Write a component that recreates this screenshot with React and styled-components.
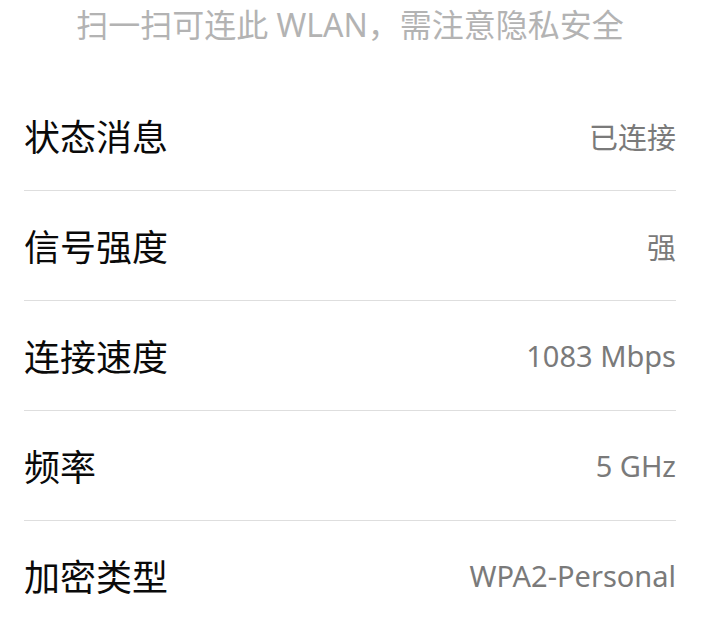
import React from 'react';
import styled, { createGlobalStyle } from 'styled-components';

const GlobalStyle = createGlobalStyle`
  body {
    margin: 0;
    background: #ffffff;
    font-family: "Noto Sans", "Noto Sans CJK SC", sans-serif;
  }
`;

const Page = styled.div`
  padding: 0 44px 0 24px;
`;

const Hint = styled.div`
  height: 50px;
  line-height: 50px;
  margin-bottom: 31px;
  text-align: center;
  font-size: 32px;
  color: #b3b3b3;
  white-space: nowrap;
`;

const List = styled.div`
  display: flex;
  flex-direction: column;
`;

const Row = styled.div`
  display: flex;
  align-items: center;
  justify-content: space-between;
  height: 109px;
  border-bottom: ${p => (p.last ? 'none' : '1px solid #dedede')};
`;

const Label = styled.span`
  font-size: 36px;
  font-weight: 400;
  color: #0a0a0a;
`;

const Value = styled.span`
  font-size: 29px;
  color: #7a7a7a;
`;

const rows = [
  ['状态消息', '已连接'],
  ['信号强度', '强'],
  ['连接速度', '1083 Mbps'],
  ['频率', '5 GHz'],
  ['加密类型', 'WPA2-Personal'],
];

export default function App() {
  return (
    <Page>
      <GlobalStyle />
      <Hint>扫一扫可连此 WLAN，需注意隐私安全</Hint>
      <List>
        {rows.map(([label, value], i) => (
          <Row key={label} last={i === rows.length - 1}>
            <Label>{label}</Label>
            <Value>{value}</Value>
          </Row>
        ))}
      </List>
    </Page>
  );
}
